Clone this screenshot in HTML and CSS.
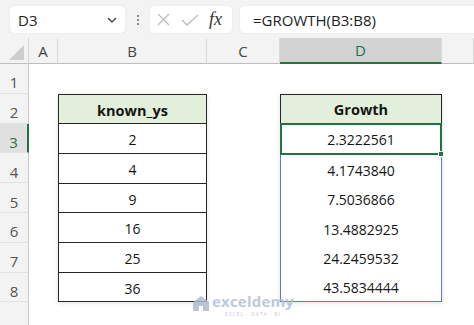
FILE: index.html
```html
<!DOCTYPE html>
<html lang="en">
<head>
  <meta charset="UTF-8" />
  <meta name="viewport" content="width=device-width, initial-scale=1" />
  <title>GROWTH</title>
  <link rel="stylesheet" href="styles.css">
</head>
<body>

  <!-- FORMULA BAR -->
  <div class="toolbar">
    <div class="namebox">
      <span>D3</span>
      <svg class="chevron" width="10" height="6" viewBox="0 0 10 6"><path d="M1 1l4 4 4-4" fill="none" stroke="#444" stroke-width="1.4"/></svg>
    </div>
    <div class="grip"><i></i><i></i><i></i></div>
    <div class="fxbox">
      <svg width="13" height="13" viewBox="0 0 13 13"><path d="M1 1l11 11M12 1L1 12" stroke="#bcbcbc" stroke-width="1.3"/></svg>
      <svg width="18" height="12" viewBox="0 0 18 12"><path d="M1 6l5 5L17 1" fill="none" stroke="#bcbcbc" stroke-width="1.3"/></svg>
      <span class="fx">fx</span>
    </div>
    <div class="formula">=GROWTH(B3:B8)</div>
  </div>

  <!-- SHEET -->
  <div class="sheet">
    <div class="corner"><span class="tri"></span></div>
    <div class="colhead">A</div>
    <div class="colhead">B</div>
    <div class="colhead">C</div>
    <div class="colhead current">D</div>
    <div class="colhead"></div>

    <div class="rowhead">1</div>
    <div class="rowhead">2</div>
    <div class="rowhead current">3</div>
    <div class="rowhead">4</div>
    <div class="rowhead">5</div>
    <div class="rowhead">6</div>
    <div class="rowhead">7</div>
    <div class="rowhead">8</div>
    <div class="rowhead"></div>

    <div class="tbl known">
      <div class="cell head">known_ys</div>
      <div class="cell">2</div>
      <div class="cell">4</div>
      <div class="cell">9</div>
      <div class="cell">16</div>
      <div class="cell">25</div>
      <div class="cell">36</div>
    </div>

    <div class="tbl growth">
      <div class="cell head">Growth</div>
      <div class="spill">
        <div class="cell sel">2.3222561<span class="handle"></span></div>
        <div class="cell">4.1743840</div>
        <div class="cell">7.5036866</div>
        <div class="cell">13.4882925</div>
        <div class="cell">24.2459532</div>
        <div class="cell">43.5834444</div>
      </div>
    </div>
  </div>

  <!-- watermark -->
  <div class="mark">
    <svg width="16" height="15" viewBox="0 0 16 15"><path d="M8 0L0 6v9h6v-5h4v5h6V6z" fill="#aebbd0"/></svg>
    <div>
      <div class="mark-name">exceldemy</div>
      <div class="mark-sub">EXCEL · DATA · BI</div>
    </div>
  </div>

</body>
</html>
```

FILE: styles.css
```css
* {
  box-sizing: border-box;
}

body {
  margin: 0;
  width: 474px;
  height: 325px;
  overflow: hidden;
  position: relative;
  font-family: 'Open Sans', sans-serif;
  background-color: white;
  color: #151515;
}

/* formula bar */
.toolbar {
  display: flex;
  height: 38px;
  padding: 6px 0 5px 10px;
  background-color: #f3f3f3;
}

.namebox,
.fxbox,
.formula {
  height: 27px;
  background-color: white;
  border-radius: 4px;
  box-shadow: 0 0 1px rgba(0, 0, 0, 0.2);
  display: flex;
  align-items: center;
  font-size: 15px;
  color: #222;
}

.namebox {
  width: 115px;
  padding: 0 8px;
  justify-content: space-between;
}

.grip {
  width: 25px;
  display: flex;
  flex-direction: column;
  align-items: center;
  justify-content: center;
  gap: 2px;
}

.grip i {
  width: 2px;
  height: 2px;
  background-color: #8a8a8a;
}

.fxbox {
  width: 82px;
  margin-right: 8px;
  padding-left: 7px;
  gap: 11px;
}

.fx {
  font-family: 'Liberation Serif', serif;
  font-style: italic;
  font-size: 18px;
  color: #333;
  margin-left: -1px;
}

.formula {
  flex: 1;
  margin-right: -6px;
  padding-left: 13px;
}

/* sheet */
.sheet {
  display: grid;
  grid-template-columns: 29px 29px 149px 73px 162px 1fr;
  grid-template-rows: 26px repeat(9, 29.8px);
}

.corner {
  grid-column: 1;
  grid-row: 1;
  background-color: #f3f3f3;
  border-right: 1px solid #d6d6d6;
  border-bottom: 1px solid #bdbdbd;
  position: relative;
}

.tri {
  position: absolute;
  right: 4px;
  bottom: 3px;
  width: 0;
  height: 0;
  border-left: 15px solid transparent;
  border-bottom: 15px solid #cdcdcd;
}

.colhead {
  grid-row: 1;
  background-color: #f3f3f3;
  border-right: 1px solid #dadada;
  border-bottom: 1px solid #bdbdbd;
  display: flex;
  align-items: center;
  justify-content: center;
  font-size: 15px;
  color: #444;
}

.colhead.current {
  background-color: #d3d3d3;
  border-bottom: 2px solid #217346;
  color: #217346;
}

.rowhead {
  grid-column: 1;
  background-color: #f3f3f3;
  border-right: 1px solid #c9c9c9;
  border-bottom: 1px solid #e2e2e2;
  display: flex;
  align-items: center;
  justify-content: center;
  padding-top: 8px;
  font-size: 15px;
  color: #555;
}

.rowhead.current {
  background-color: #e1e1e1;
  border-right: 2px solid #217346;
  color: #217346;
}

/* data tables */
.tbl {
  grid-row: 3 / 10;
  display: flex;
  flex-direction: column;
  box-shadow: 0 1px 5px rgba(0, 0, 0, 0.12);
}

.known {
  grid-column: 3;
  border: 1px solid #262626;
}

.growth {
  grid-column: 5;
}

.cell {
  flex: 1;
  display: flex;
  align-items: center;
  justify-content: center;
  padding-top: 2px;
  font-size: 14px;
}

.known .cell + .cell {
  border-top: 1px solid #262626;
}

.head {
  background-color: #e2efda;
  font-weight: bold;
  font-size: 14.5px;
}

.growth .head {
  flex: none;
  height: 29.8px;
  border: 1px solid #262626;
}

.spill {
  flex: 1;
  display: flex;
  flex-direction: column;
  border: 1px solid #4f80d2;
  border-top: none;
}

.sel {
  position: relative;
  margin: -1px -1px 0;
  border: 2px solid #217346;
  padding-top: 1px;
}

.handle {
  position: absolute;
  right: -4px;
  bottom: -4px;
  width: 6px;
  height: 6px;
  background-color: #217346;
  border: 1px solid white;
}

/* watermark */
.mark {
  position: absolute;
  left: 193px;
  top: 294px;
  display: flex;
  align-items: flex-start;
  gap: 3px;
  opacity: 0.85;
}

.mark svg {
  margin-top: 2px;
}

.mark-name {
  font-size: 15px;
  font-weight: bold;
  line-height: 15px;
  color: #b3c0d6;
  letter-spacing: 0.2px;
}

.mark-sub {
  margin-top: 3px;
  font-size: 5px;
  line-height: 5px;
  letter-spacing: 1px;
  color: #bcc6d8;
  text-align: center;
}
```
